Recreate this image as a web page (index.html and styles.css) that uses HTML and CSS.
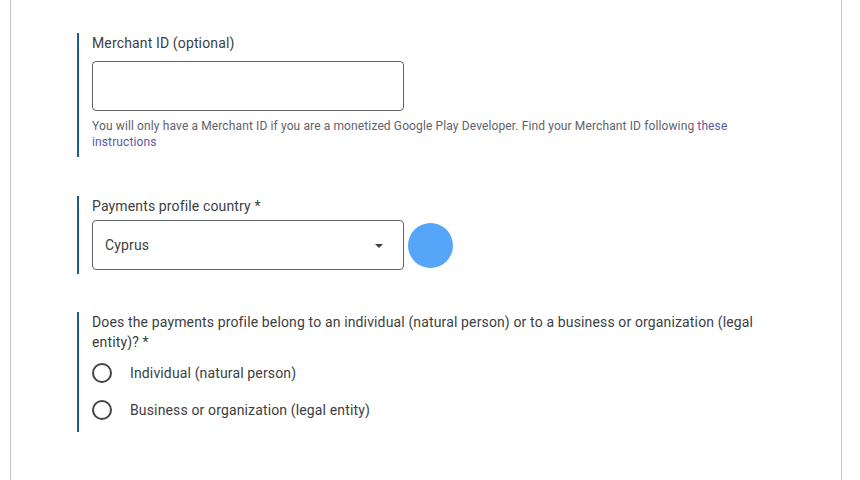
FILE: index.html
```html
<!DOCTYPE html>
<html lang="en">
<head>
  <meta charset="UTF-8">
  <meta name="viewport" content="width=device-width, initial-scale=1.0">
  <title>Payments profile</title>
  <link rel="stylesheet" href="styles.css">
</head>
<body>

  <div class="pagina">

    <div class="pergunta merchant">
      <label class="rotulo" for="merchant">Merchant ID (optional)</label>
      <input type="text" id="merchant" class="campo">
      <p class="ajuda">You will only have a Merchant ID if you are a monetized Google Play Developer. Find your Merchant ID following <a href="#">these instructions</a></p>
    </div>

    <div class="pergunta pais">
      <div class="rotulo">Payments profile country *</div>
      <div class="linha-select">
        <div class="campo select">
          <span>Cyprus</span>
          <span class="seta"></span>
        </div>
        <div class="cursor"></div>
      </div>
    </div>

    <div class="pergunta tipo">
      <div class="rotulo texto">Does the payments profile belong to an individual (natural person) or to a business or organization (legal entity)? *</div>
      <label class="opcao"><span class="radio"></span>Individual (natural person)</label>
      <label class="opcao"><span class="radio"></span>Business or organization (legal entity)</label>
    </div>

  </div>

</body>
</html>
```

FILE: styles.css
```css
/* Estilos gerais */
body {
  margin: 0;
  background-color: #fff;
  font-family: Roboto, "Liberation Sans", Arial, sans-serif;
  color: #3c4043;
}

.pagina {
  margin: 0 18px 0 10px;
  min-height: 480px;
  box-sizing: border-box;
  border-left: 1px solid #c4c4c4;
  border-right: 1px solid #c4c4c4;
  padding: 33px 0 0 66px;
}

/* Blocos de pergunta */
.pergunta {
  border-left: 2px solid #1d5a8e;
  padding-left: 13px;
  max-width: 680px;
}

.rotulo {
  display: block;
  font-size: 14px;
  line-height: 20px;
  letter-spacing: 0.14px;
  color: #3c4043;
}

.campo {
  display: block;
  box-sizing: border-box;
  width: 312px;
  height: 50px;
  border: 1px solid #5f6368;
  border-radius: 4px;
  background: #fff;
  font-size: 14px;
  letter-spacing: 0.14px;
  color: #3c4043;
}

.merchant {
  padding-bottom: 7px;
}

.merchant .campo {
  margin-top: 8px;
}

.ajuda {
  margin: 7px 0 0;
  font-size: 12px;
  line-height: 16px;
  letter-spacing: 0.12px;
  color: #5f6368;
}

.ajuda a {
  color: #5b57a8;
  text-decoration: none;
}

/* Pais */
.pais {
  margin-top: 39px;
  padding-bottom: 4px;
}

.linha-select {
  display: flex;
  align-items: center;
  margin-top: 4px;
}

.select {
  display: flex;
  align-items: center;
  justify-content: space-between;
  padding: 0 20px 0 12px;
}

.seta {
  width: 0;
  height: 0;
  border-left: 4px solid transparent;
  border-right: 4px solid transparent;
  border-top: 4px solid #3c4043;
  margin-top: 2px;
}

.cursor {
  width: 45px;
  height: 45px;
  border-radius: 50%;
  background-color: #55a5f8;
  margin-left: 4px;
}

/* Tipo de perfil */
.tipo {
  margin-top: 38px;
  padding-bottom: 4px;
}

.opcao {
  display: flex;
  align-items: center;
  height: 37px;
  font-size: 14px;
  letter-spacing: 0.14px;
  color: #3c4043;
}

.opcao:first-of-type {
  margin-top: 2px;
}

.radio {
  width: 20px;
  height: 20px;
  box-sizing: border-box;
  border: 2px solid #444;
  border-radius: 50%;
  margin-right: 18px;
}
```
